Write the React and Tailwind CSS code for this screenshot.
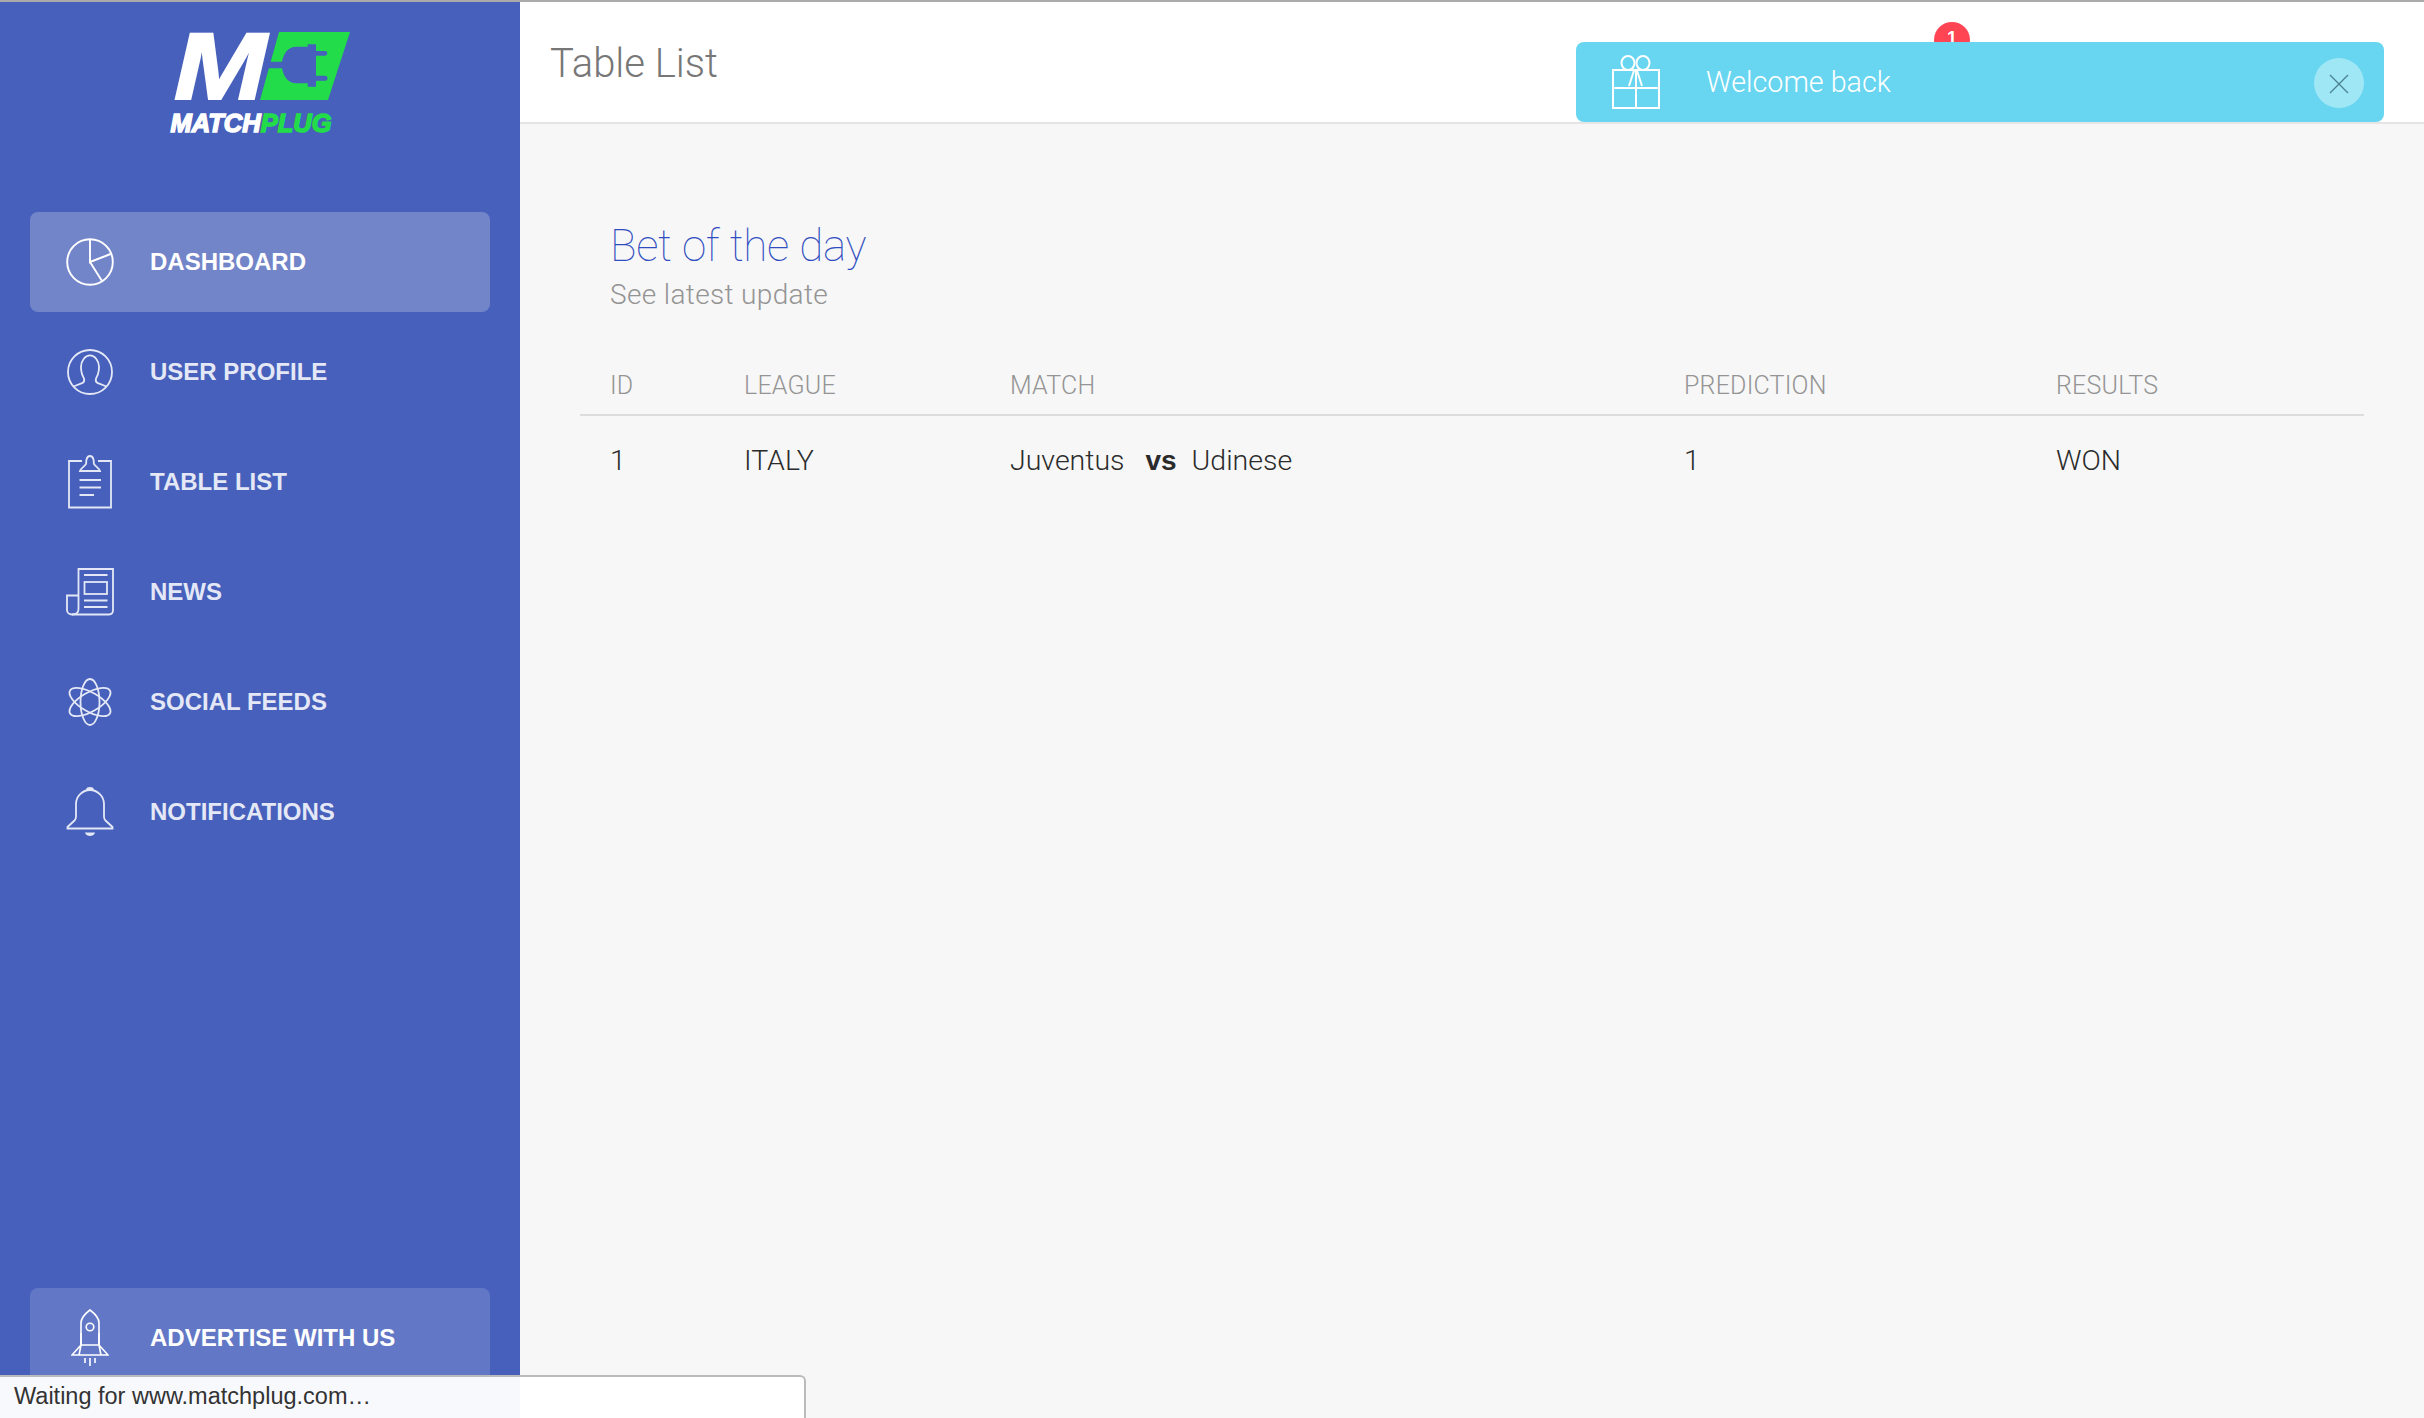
import React from 'react';

const sans = "font-['Liberation_Sans',Arial,sans-serif]";
const light = "font-['Roboto',Arial,sans-serif] font-light";

function PieIcon() {
  return (
    <svg width="48" height="48" viewBox="0 0 48 48" fill="none" stroke="currentColor" strokeWidth="1.9">
      <circle cx="24" cy="24" r="22.8" />
      <path d="M24 1.5V24L44.5 16M24 24L36 43" />
    </svg>
  );
}

function UserIcon() {
  return (
    <svg width="48" height="48" viewBox="0 0 48 48" fill="none" stroke="currentColor" strokeWidth="1.8">
      <circle cx="24" cy="24" r="22" />
      <path d="M7.5 38.5L16 35.2C18 34.3 18.4 33 18.2 31.5C18 30 16.6 28 16 26C15.3 23.5 14.8 21 15 18.5C15.3 12.8 19.2 7.4 24 7.4C28.8 7.4 32.7 12.8 33 18.5C33.2 21 32.7 23.5 32 26C31.4 28 30 30 29.8 31.5C29.6 33 30 34.3 32 35.2L40.5 38.5" />
    </svg>
  );
}

function ClipboardIcon() {
  return (
    <svg width="46" height="54" viewBox="0 0 46 54" fill="none" stroke="currentColor" strokeWidth="1.8">
      <path d="M15 6H2V52.5H44V6H31" />
      <path d="M13 16C14 13 17.5 11.5 19 9C19.5 7.5 19 6.5 19.5 4.5C20 2.5 21.5 1 23 1C24.5 1 26 2.5 26.5 4.5C27 6.5 26.5 7.5 27 9C28.5 11.5 32 13 33 16Z" />
      <path d="M12.5 25H34M12.5 32.5H34M12.5 40H27" />
    </svg>
  );
}

function NewsIcon() {
  return (
    <svg width="48" height="48" viewBox="0 0 48 48" fill="none" stroke="currentColor" strokeWidth="1.8">
      <path d="M12.5 41V1H47V42C47 44.5 45.5 46.5 43 46.5H6C3 46.5 1 44.5 1 42V27.5H12.5" />
      <path d="M12.5 41C12.5 44.5 10 46.5 6 46.5" />
      <path d="M18 7H41.5M18 32.5H41.5M18 39H41.5" />
      <rect x="18.5" y="14" width="22.5" height="12" />
    </svg>
  );
}

function AtomIcon() {
  return (
    <svg width="44" height="48" viewBox="0 0 44 48" fill="none" stroke="currentColor" strokeWidth="1.8">
      <ellipse cx="22" cy="24" rx="9.5" ry="23" />
      <ellipse cx="22" cy="24" rx="9.5" ry="23" transform="rotate(60 22 24)" />
      <ellipse cx="22" cy="24" rx="9.5" ry="23" transform="rotate(-60 22 24)" />
    </svg>
  );
}

function BellIcon() {
  return (
    <svg width="48" height="50" viewBox="0 0 48 50" fill="none" stroke="currentColor" strokeWidth="1.8">
      <path d="M1.5 41.5H46.5V40L39.5 33.5C38.5 32.5 38 31.5 38 29.5V17C38 9.5 31.5 3 24 3C16.5 3 10 9.5 10 17V29.5C10 31.5 9.5 32.5 8.5 33.5L1.5 40Z" />
      <path d="M21 2.5C21.5 0.5 26.5 0.5 27 2.5Z" fill="currentColor" />
      <path d="M19 45.5H29C28.5 50 19.5 50 19 45.5Z" fill="currentColor" stroke="none" />
    </svg>
  );
}

function RocketIcon() {
  return (
    <svg width="38" height="58" viewBox="0 0 38 58" fill="none" stroke="currentColor" strokeWidth="1.6">
      <path d="M10 36V14C10 9 15 4 19 1C23 4 28 9 28 14V36Z" />
      <circle cx="19" cy="18" r="3.8" />
      <path d="M10 24V36L1 46H37L28 36V24M10 36L8 46M28 36L30 46" />
      <path d="M14 49V54M19 49V57M24 49V54" />
    </svg>
  );
}

function GiftIcon() {
  return (
    <svg width="48" height="54" viewBox="0 0 48 54" fill="none" stroke="white" strokeWidth="2">
      <rect x="1" y="15" width="46" height="38" />
      <path d="M1 33H47M24 15V53" />
      <ellipse cx="16" cy="8" rx="6.5" ry="7" />
      <ellipse cx="31" cy="8" rx="6.5" ry="7" />
      <path d="M22.5 14L17 31M24.5 14L30 31" />
    </svg>
  );
}

function PlugMark() {
  return (
    <svg width="90" height="68" viewBox="0 0 90 68" className="-ml-[11px] shrink-0">
      <path d="M19 0H90L68 68H0Z" fill="#22dc4a" />
      <path
        d="M8 29.7H22C24 20 29 14.7 36 14.7H47.7V12.3H56V19H65A2.3 2.3 0 0 1 65 23.7H56V43.7H65A2.5 2.5 0 0 1 65 48.7H56V54.7H47.7V51.3H36C29 51.3 24 46 22 36.3H8Z"
        fill="#4660bb"
      />
    </svg>
  );
}

const navItems = [
  { label: 'DASHBOARD', icon: PieIcon, active: true },
  { label: 'USER PROFILE', icon: UserIcon },
  { label: 'TABLE LIST', icon: ClipboardIcon },
  { label: 'NEWS', icon: NewsIcon },
  { label: 'SOCIAL FEEDS', icon: AtomIcon },
  { label: 'NOTIFICATIONS', icon: BellIcon },
];

function NavItem({ item }) {
  const Icon = item.icon;
  return (
    <a
      className={`flex h-[100px] items-center rounded-[8px] ${item.active ? 'bg-[#7385c9] text-white' : 'text-[#e4e8f6]'}`}
    >
      <span className="flex w-[120px] shrink-0 justify-center">
        <Icon />
      </span>
      <span className="text-[24px] font-bold">{item.label}</span>
    </a>
  );
}

export default function App() {
  return (
    <div className={`relative flex h-[1418px] w-[2424px] overflow-hidden border-t-2 border-[#aaaaaa] bg-[#f7f7f7] ${sans}`}>
      <aside className="flex w-[520px] shrink-0 flex-col bg-[#4660bb] px-[30px]">
        <div className="flex h-[210px] flex-col items-center pt-[30px] pr-[4px]">
          <div className="flex items-start pl-[7px]">
            <span className="w-[97px] origin-left scale-x-[1.17] text-[95px] leading-[68px] font-bold text-white italic [-webkit-text-stroke:2px_white]">
              M
            </span>
            <PlugMark />
          </div>
          <div className="mt-[11px] mr-[14px] text-[25.5px] leading-[24px] font-bold italic [-webkit-text-stroke:1.5px_currentColor]">
            <span className="text-white">MATCH</span>
            <span className="text-[#22dc4a]">PLUG</span>
          </div>
        </div>
        <nav className="flex flex-col gap-[10px]">
          {navItems.map((item) => (
            <NavItem key={item.label} item={item} />
          ))}
        </nav>
        <a className="mt-auto mb-[30px] flex h-[100px] items-center rounded-[8px] bg-[#6278c6] text-white">
          <span className="flex w-[120px] shrink-0 justify-center">
            <RocketIcon />
          </span>
          <span className="text-[24px] font-bold">ADVERTISE WITH US</span>
        </a>
      </aside>

      <div className="flex min-w-0 flex-1 flex-col">
        <header className="flex h-[122px] shrink-0 items-center border-b-2 border-[#e5e5e5] bg-white pt-[3px] pl-[30px]">
          <h1 className={`text-[40px] text-[#777777] ${light}`}>Table List</h1>
        </header>
        <main className="pt-[95px] pr-[60px] pl-[60px]">
          <div className="pl-[30px]">
            <h2 className="font-['Roboto',Arial,sans-serif] text-[44px] leading-[54px] font-thin tracking-[-0.3px] text-[#2f4dc0]">
              Bet of the day
            </h2>
            <p className={`mt-[4px] text-[28px] leading-[36px] tracking-[0.35px] text-[#949494] ${light}`}>See latest update</p>
          </div>
          <table className={`mt-[42px] w-full border-collapse text-left ${light}`}>
            <colgroup>
              <col className="w-[134px]" />
              <col className="w-[266px]" />
              <col className="w-[674px]" />
              <col className="w-[372px]" />
              <col />
            </colgroup>
            <thead>
              <tr className="border-b-2 border-[#dddddd]">
                {['ID', 'LEAGUE', 'MATCH', 'PREDICTION', 'RESULTS'].map((h) => (
                  <th key={h} className="h-[60px] pt-[2px] pl-[30px] text-[25px] font-light tracking-[0.2px] text-[#949494]">
                    {h}
                  </th>
                ))}
              </tr>
            </thead>
            <tbody className="text-[28.5px] text-[#2b2b2b]">
              <tr className="[&>td]:pt-[3px]">
                <td className="h-[88px] pl-[30px]">1</td>
                <td className="pl-[30px]">ITALY</td>
                <td className="pl-[30px]">
                  Juventus <b className="mr-[8px] ml-[14px] font-['Liberation_Sans'] text-[28px] font-bold">vs</b> Udinese
                </td>
                <td className="pl-[30px]">1</td>
                <td className="pl-[30px]">WON</td>
              </tr>
            </tbody>
          </table>
        </main>
      </div>

      {/* notification badge sits behind the toast */}
      <span className="absolute top-[20px] left-[1934px] flex h-[36px] w-[36px] justify-center rounded-full bg-[#ff4454] pt-[6px] text-[18px] leading-[20px] font-bold text-white">
        1
      </span>

      {/* toast */}
      <div className="absolute top-[40px] left-[1576px] flex h-[80px] w-[808px] items-center rounded-[8px] bg-[#68d6f0] pr-[20px] pl-[36px]">
        <GiftIcon />
        <span className={`ml-[46px] flex-1 pt-[2px] text-[28.7px] text-white ${light}`}>Welcome back</span>
        <span className="mt-[2px] flex h-[50px] w-[50px] items-center justify-center rounded-full bg-[#a0e7f6]">
          <svg width="20" height="20" viewBox="0 0 20 20" stroke="#4a7f8c" strokeWidth="1.2" className="mt-[2px]">
            <path d="M1 1L19 19M19 1L1 19" />
          </svg>
        </span>
      </div>

      {/* browser status bubble */}
      <div className="absolute bottom-0 left-0 flex h-[43px] w-[806px] items-center rounded-tr-[6px] border-t-2 border-r-2 border-[#bbbbbb] bg-white pb-[2px] pl-[14px]">
        <span className="absolute inset-y-0 left-0 w-[520px] bg-[#f8f9fd]" />
        <span className="relative text-[23.5px] text-[#333333]">Waiting for www.matchplug.com…</span>
      </div>
    </div>
  );
}
